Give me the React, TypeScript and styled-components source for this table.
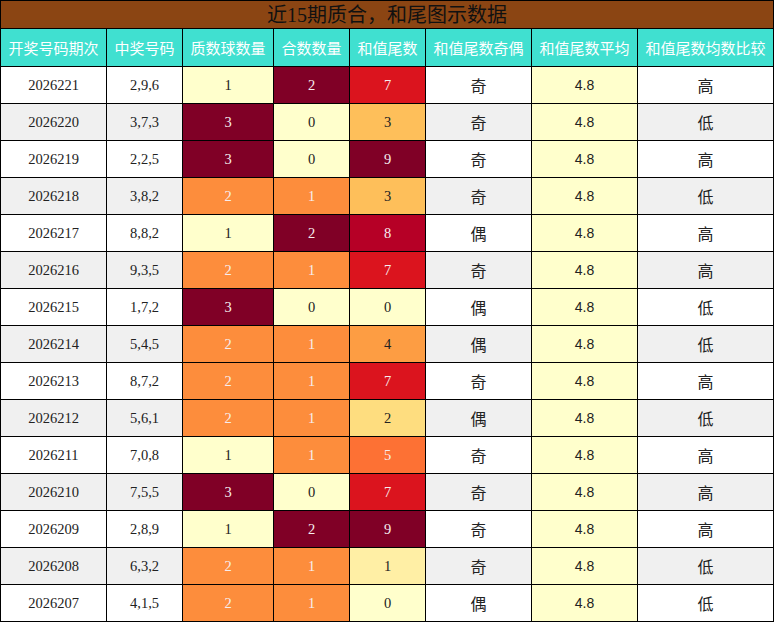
import React from "react";
import styled, { createGlobalStyle } from "styled-components";

const GlobalStyle = createGlobalStyle`
  html, body { margin: 0; padding: 0; background: #ffffff; }
`;

const SERIF = `"Liberation Serif", "Noto Sans CJK SC", serif`;
const CJK = `"Noto Sans CJK SC", "Liberation Sans", sans-serif`;
const SANS = `"Liberation Sans", "Noto Sans CJK SC", sans-serif`;

const Grid = styled.div`
  display: grid;
  grid-template-columns: 105px 75px 90px 75px 75px 105px 105px 135px;
  grid-template-rows: 27px 37px;
  grid-auto-rows: 36px;
  gap: 1px;
  padding: 1px;
  width: 774px;
  box-sizing: border-box;
  background: #000000;
`;

const Title = styled.div`
  grid-column: 1 / -1;
  background: #8b4513;
  color: #111111;
  font-family: ${SERIF};
  font-size: 20px;
  display: flex;
  align-items: center;
  justify-content: center;
  line-height: 1;
`;

const HeadCell = styled.div`
  background: #40e0d0;
  color: #ffffff;
  font-family: ${CJK};
  font-size: 15px;
  display: flex;
  align-items: center;
  justify-content: center;
  white-space: nowrap;
`;

type Font = "serif" | "cjk" | "sans";

const Cell = styled.div<{ $bg: string; $fg?: string; $font?: Font }>`
  background: ${(p) => p.$bg};
  color: ${(p) => p.$fg ?? "#222222"};
  font-family: ${(p) => (p.$font === "cjk" ? CJK : p.$font === "sans" ? SANS : SERIF)};
  font-size: ${(p) => (p.$font === "cjk" ? "16px" : p.$font === "sans" ? "14px" : "14.5px")};
  display: flex;
  align-items: center;
  justify-content: center;
`;

const STOPS = ["ffffcc", "ffeda0", "fed976", "feb24c", "fd8d3c", "fc4e2a", "e31a1c", "bd0026", "800026"].map(
  (h) => [parseInt(h.slice(0, 2), 16), parseInt(h.slice(2, 4), 16), parseInt(h.slice(4, 6), 16)]
);

function ylOrRd(t: number): string {
  const x = Math.max(0, Math.min(1, t)) * (STOPS.length - 1);
  const i = Math.min(STOPS.length - 2, Math.floor(x));
  const f = x - i;
  const c = STOPS[i].map((v, k) => Math.round(v + (STOPS[i + 1][k] - v) * f));
  return `rgb(${c[0]}, ${c[1]}, ${c[2]})`;
}

const heat = (v: number, min: number, max: number) => {
  const t = (v - min) / (max - min);
  return { bg: ylOrRd(t), fg: t >= 0.5 ? "#f6eeee" : "#222222" };
};

const headers = ["开奖号码期次", "中奖号码", "质数球数量", "合数数量", "和值尾数", "和值尾数奇偶", "和值尾数平均", "和值尾数均数比较"];

type Row = [string, string, number, number, number, string, string];

const rows: Row[] = [
  ["2026221", "2,9,6", 1, 2, 7, "奇", "高"],
  ["2026220", "3,7,3", 3, 0, 3, "奇", "低"],
  ["2026219", "2,2,5", 3, 0, 9, "奇", "高"],
  ["2026218", "3,8,2", 2, 1, 3, "奇", "低"],
  ["2026217", "8,8,2", 1, 2, 8, "偶", "高"],
  ["2026216", "9,3,5", 2, 1, 7, "奇", "高"],
  ["2026215", "1,7,2", 3, 0, 0, "偶", "低"],
  ["2026214", "5,4,5", 2, 1, 4, "偶", "低"],
  ["2026213", "8,7,2", 2, 1, 7, "奇", "高"],
  ["2026212", "5,6,1", 2, 1, 2, "偶", "低"],
  ["2026211", "7,0,8", 1, 1, 5, "奇", "高"],
  ["2026210", "7,5,5", 3, 0, 7, "奇", "高"],
  ["2026209", "2,8,9", 1, 2, 9, "奇", "高"],
  ["2026208", "6,3,2", 2, 1, 1, "奇", "低"],
  ["2026207", "4,1,5", 2, 1, 0, "偶", "低"],
];

export default function App() {
  return (
    <>
      <GlobalStyle />
      <Grid>
        <Title>近15期质合，和尾图示数据</Title>
        {headers.map((h) => (
          <HeadCell key={h}>{h}</HeadCell>
        ))}
        {rows.map((r, i) => {
          const base = i % 2 === 1 ? "#f0f0f0" : "#ffffff";
          const p = heat(r[2], 1, 3);
          const c = heat(r[3], 0, 2);
          const s = heat(r[4], 0, 9);
          return (
            <React.Fragment key={r[0]}>
              <Cell $bg={base}>{r[0]}</Cell>
              <Cell $bg={base}>{r[1]}</Cell>
              <Cell $bg={p.bg} $fg={p.fg}>{r[2]}</Cell>
              <Cell $bg={c.bg} $fg={c.fg}>{r[3]}</Cell>
              <Cell $bg={s.bg} $fg={s.fg}>{r[4]}</Cell>
              <Cell $bg={base} $font="cjk">{r[5]}</Cell>
              <Cell $bg="#ffffcc" $font="sans">4.8</Cell>
              <Cell $bg={base} $font="cjk">{r[6]}</Cell>
            </React.Fragment>
          );
        })}
      </Grid>
    </>
  );
}
